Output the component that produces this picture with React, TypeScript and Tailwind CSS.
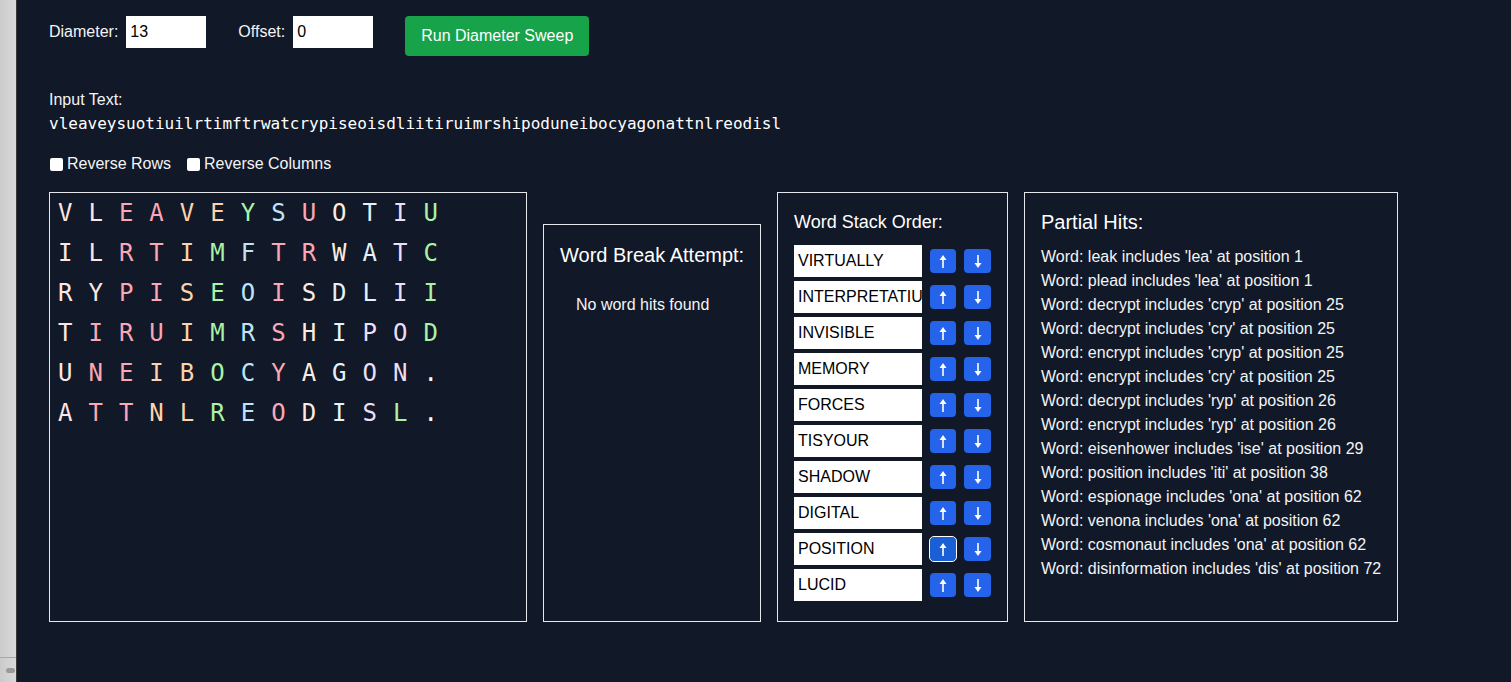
import React from "react";

const grid: string[] = [
  "VLEAVEYSUOTIU",
  "ILRTIMFTRWATC",
  "RYPISEOISDLII",
  "TIRUIMRSHIPOD",
  "UNEIBOCYAGON.",
  "ATTNLREODISL.",
];

const codes: string[] = [
  "wwppoogbpxylg",
  "wwppogbppxylg",
  "wwppogbpxyylg",
  "wpppogbpxyllg",
  "wppoogbpxyllz",
  "wppoogbpxylgz",
];

const colorMap: Record<string, string> = {
  w: "text-[#fde6e4]",
  p: "text-[#fba7b4]",
  o: "text-[#fdd3ab]",
  g: "text-[#aaf3a6]",
  b: "text-[#bfe4f7]",
  x: "text-[#fdebdf]",
  y: "text-[#e3f2fc]",
  l: "text-[#ecdff6]",
  z: "text-white",
};

const words = [
  "VIRTUALLY",
  "INTERPRETATIUN",
  "INVISIBLE",
  "MEMORY",
  "FORCES",
  "TISYOUR",
  "SHADOW",
  "DIGITAL",
  "POSITION",
  "LUCID",
];

const hits = [
  "Word: leak includes 'lea' at position 1",
  "Word: plead includes 'lea' at position 1",
  "Word: decrypt includes 'cryp' at position 25",
  "Word: decrypt includes 'cry' at position 25",
  "Word: encrypt includes 'cryp' at position 25",
  "Word: encrypt includes 'cry' at position 25",
  "Word: decrypt includes 'ryp' at position 26",
  "Word: encrypt includes 'ryp' at position 26",
  "Word: eisenhower includes 'ise' at position 29",
  "Word: position includes 'iti' at position 38",
  "Word: espionage includes 'ona' at position 62",
  "Word: venona includes 'ona' at position 62",
  "Word: cosmonaut includes 'ona' at position 62",
  "Word: disinformation includes 'dis' at position 72",
];

function Arrow({ down }: { down?: boolean }) {
  return (
    <svg
      width="8"
      height="13"
      viewBox="0 0 8 13"
      className={down ? "rotate-180" : ""}
      fill="white"
    >
      <polygon points="4,0 7.5,5 0.5,5" />
      <rect x="3.2" y="4" width="1.6" height="9" />
    </svg>
  );
}

export default function App() {
  return (
    <div
      className="flex min-h-screen bg-[#111827] text-[#f3f4f6]"
      style={{ fontFamily: '"Liberation Sans", Arial, sans-serif' }}
    >
      <div className="relative w-[17px] shrink-0 bg-linear-to-r from-[#cbcbcb] to-[#d9d9d9] border-r border-[#3a3a3a]">
        <div className="absolute left-0 right-0 top-[657px] h-px bg-[#a8a8a8]" />
        <div className="absolute left-[6px] right-[1px] top-[668px] h-[5px] rounded-sm bg-[#9a9a9a]" />
      </div>
      <div className="flex-1 px-8 pt-4">
        <div className="flex items-start gap-8">
          <div className="flex h-8 items-center gap-2">
            <span className="text-base leading-6">Diameter:</span>
            <input
              className="h-8 w-20 bg-white pl-1 text-base text-black outline-none"
              defaultValue="13"
            />
          </div>
          <div className="flex h-8 items-center gap-2">
            <span className="text-base leading-6">Offset:</span>
            <input
              className="h-8 w-20 bg-white pl-1 text-base text-black outline-none"
              defaultValue="0"
            />
          </div>
          <button className="h-10 rounded bg-[#16a34a] px-4 text-base text-white">
            Run Diameter Sweep
          </button>
        </div>

        <div className="mt-8 text-base leading-6">Input Text:</div>
        <div
          className="text-base leading-6 text-white"
          style={{ fontFamily: '"DejaVu Sans Mono", monospace' }}
        >
          vleaveysuotiuilrtimftrwatcrypiseoisdliitiruimrshipoduneibocyagonattnlreodisl
        </div>

        <div className="mt-4 flex items-center text-base leading-6">
          <label className="mr-4 flex items-center gap-1">
            <input
              type="checkbox"
              className="ml-px h-[13px] w-[13px] appearance-none rounded-[2px] bg-white"
            />
            <span>Reverse Rows</span>
          </label>
          <label className="flex items-center gap-1">
            <input
              type="checkbox"
              className="h-[13px] w-[13px] appearance-none rounded-[2px] bg-white"
            />
            <span>Reverse Columns</span>
          </label>
        </div>

        <div className="mt-4 flex h-[430px] items-stretch gap-4">
          <div
            className="w-[478px] border border-[#e5e7eb] px-2"
            style={{ fontFamily: '"DejaVu Sans Mono", monospace' }}
          >
            {grid.map((row, r) => (
              <div key={r} className="flex text-[24px] leading-[40px]">
                {row.split("").map((ch, c) => (
                  <span key={c} className={`mr-4 ${colorMap[codes[r][c]]}`}>
                    {ch}
                  </span>
                ))}
              </div>
            ))}
          </div>

          <div className="mt-8 w-[218px] border border-[#e5e7eb] p-4">
            <div className="whitespace-nowrap text-[20px] leading-7 text-white">
              Word Break Attempt:
            </div>
            <div className="mt-6 whitespace-nowrap pl-4 text-base leading-6">
              No word hits found
            </div>
          </div>

          <div className="w-[231px] border border-[#e5e7eb] px-4 pb-4 pt-[15px]">
            <div className="mb-[9px] text-[18px] leading-7 text-white">Word Stack Order:</div>
            <div className="flex flex-col gap-1">
              {words.map((w, i) => (
                <div key={i} className="flex items-center gap-2">
                  <input
                    className="h-8 w-32 bg-white pl-1 text-base text-black outline-none"
                    defaultValue={w}
                  />
                  <button
                    className={`flex h-6 w-[26px] items-center justify-center rounded ${
                      i === 8
                        ? "bg-[#1b5fd6] outline outline-1 outline-white"
                        : "bg-[#2563eb]"
                    }`}
                  >
                    <Arrow />
                  </button>
                  <button className="flex h-6 w-[27px] items-center justify-center rounded bg-[#2563eb]">
                    <Arrow down />
                  </button>
                </div>
              ))}
            </div>
          </div>

          <div className="w-[374px] border border-[#e5e7eb] px-4 pb-4 pt-[15px]">
            <div className="text-[20px] leading-7 text-white">Partial Hits:</div>
            <div className="mt-[9px] flex flex-col">
              {hits.map((h, i) => (
                <div key={i} className="whitespace-nowrap text-base leading-6">
                  {h}
                </div>
              ))}
            </div>
          </div>
        </div>
      </div>
    </div>
  );
}
